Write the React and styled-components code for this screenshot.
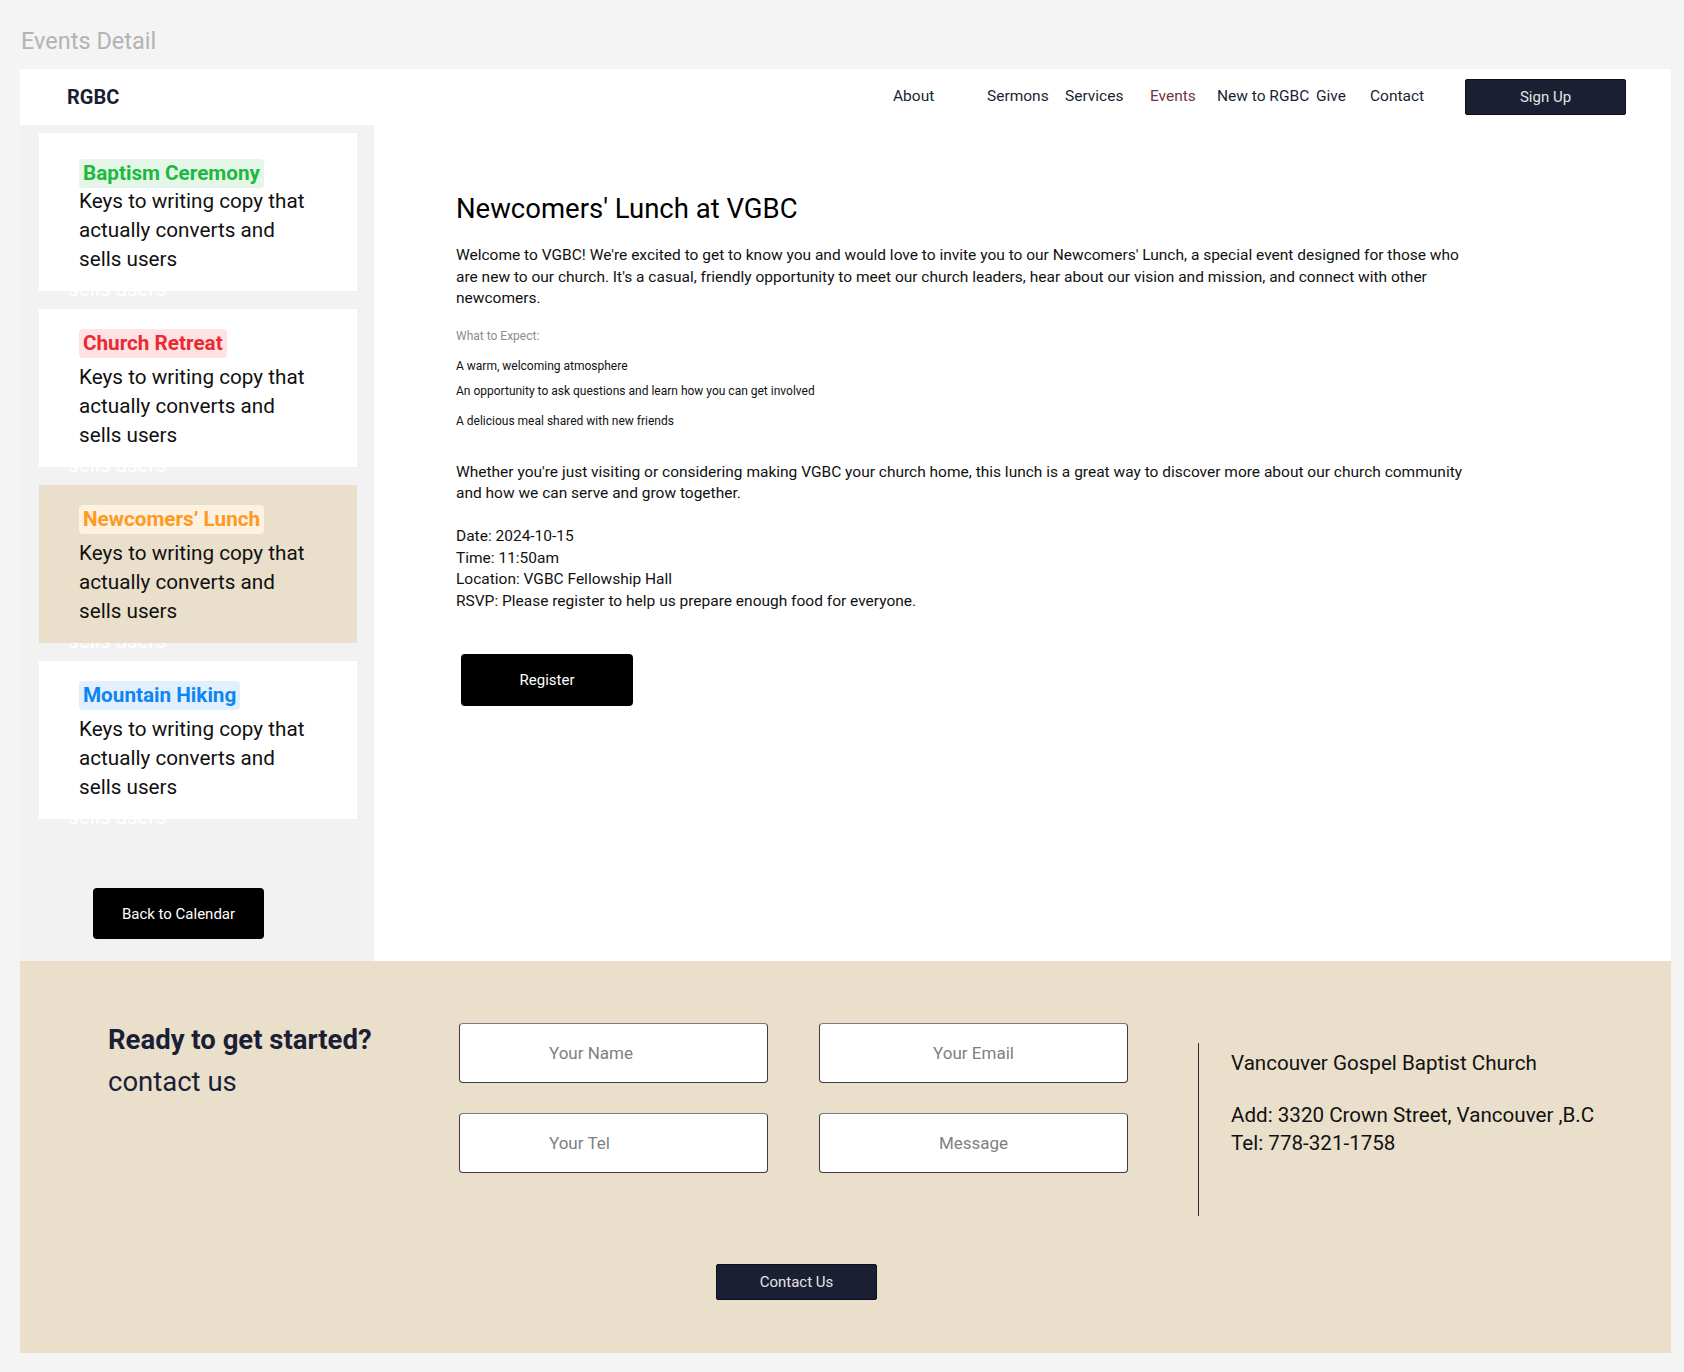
import React from 'react';
import styled, { createGlobalStyle } from 'styled-components';

const GlobalStyle = createGlobalStyle`
  * {
    box-sizing: border-box;
  }

  body {
    margin: 0;
    background: #f4f4f4;
    font-family: Roboto, 'Liberation Sans', sans-serif;
  }
`;

const Page = styled('div')`
  padding: 28px 13px 18px 20px;
`;

const PageTitle = styled('div')`
  margin: 0 0 15px 1px;
  font-size: 23.5px;
  line-height: 26px;
  color: #b3b3b3;
`;

const Frame = styled('div')`
  display: flex;
  flex-direction: column;
  background: #fff;
`;

const Header = styled('header')`
  display: flex;
  align-items: center;
  height: 56px;
  padding: 0 45px 0 47px;
`;

const Logo = styled('div')`
  font-size: 20px;
  font-weight: 700;
  color: #1a1f33;
`;

const Nav = styled('nav')`
  display: flex;
  align-items: center;
  margin-left: auto;
  padding-bottom: 3px;
`;

const NavLink = styled('a')`
  width: ${(p) => p.$width}px;
  font-size: 15.5px;
  color: ${(p) => (p.$active ? '#6f3446' : '#1a1f33')};
  text-decoration: none;
  white-space: nowrap;
`;

const SignUp = styled('button')`
  width: 161px;
  height: 36px;
  border: 1px solid #0c0f1c;
  border-radius: 2px;
  background: #1a1f33;
  color: #e4e4e4;
  font-family: inherit;
  font-size: 15px;
`;

const Body = styled('div')`
  display: flex;
`;

const Sidebar = styled('aside')`
  display: flex;
  flex-direction: column;
  width: 354px;
  padding: 8px 17px 22px 19px;
  background: #f2f2f2;
`;

const CardList = styled('div')`
  display: flex;
  flex-direction: column;
  gap: 18px;
`;

const CardSlot = styled('div')`
  position: relative;
`;

const Card = styled('div')`
  position: relative;
  z-index: 1;
  display: flex;
  flex-direction: column;
  align-items: flex-start;
  height: 158px;
  padding: 20px 0 0 40px;
  background: ${(p) => (p.$active ? '#e9dfcb' : '#fff')};
`;

const Tag = styled('span')`
  padding: 2px 4px;
  border-radius: 4px;
  font-size: 20.7px;
  line-height: 25px;
  font-weight: 700;
  color: ${(p) => p.$color};
  background: ${(p) => p.$bg};
  transform: translateY(${(p) => p.$drop || 0}px);
`;

const CardText = styled('div')`
  width: 232px;
  margin-top: 5px;
  font-size: 20.7px;
  line-height: 29px;
  color: #111;
`;

// leftover copy that peeks out under each card
const Ghost = styled('span')`
  position: absolute;
  z-index: 0;
  top: 142px;
  left: 29px;
  font-size: 20.7px;
  line-height: 29px;
  color: #fff;
`;

const DarkButton = styled('button')`
  width: ${(p) => p.$w}px;
  height: ${(p) => p.$h}px;
  border: none;
  border-radius: 4px;
  background: #000;
  color: #fff;
  font-family: inherit;
  font-size: 15px;
`;

const BackButton = styled(DarkButton)`
  margin: 69px 0 0 54px;
`;

const Main = styled('main')`
  flex: 1;
  padding: 67px 0 0 82px;
`;

const Title = styled('h1')`
  margin: 0;
  font-size: 27.5px;
  line-height: 33px;
  font-weight: 400;
  color: #000;
`;

const Paragraph = styled('p')`
  width: 1016px;
  margin: ${(p) => p.$top}px 0 0;
  font-size: 15.5px;
  line-height: 21.5px;
  color: #111;
`;

const SmallLine = styled('p')`
  margin: ${(p) => p.$top}px 0 0;
  font-size: 12px;
  line-height: 16px;
  color: ${(p) => (p.$muted ? '#8c8c8c' : '#111')};
`;

const RegisterButton = styled(DarkButton)`
  margin: 42px 0 0 5px;
`;

const Footer = styled('footer')`
  display: flex;
  align-items: flex-start;
  padding: 62px 0 53px 88px;
  background: #e9dfcb;
`;

const FooterIntro = styled('div')`
  width: 351px;
  color: #1b1f36;
  font-size: 27.5px;
  line-height: 34px;
`;

const Lead = styled('div')`
  font-weight: 700;
`;

const SubLead = styled('div')`
  margin-top: 8px;
`;

const FormCol = styled('div')`
  display: flex;
  flex-direction: column;
  width: 669px;
`;

const FieldGrid = styled('div')`
  display: grid;
  grid-template-columns: 309px 309px;
  column-gap: 51px;
  row-gap: 30px;
`;

const Field = styled('input')`
  height: 60px;
  padding: 0 0 0 ${(p) => (p.$center ? 0 : 89)}px;
  border: 1px solid #3d3d3d;
  border-top-color: #7a7a7a;
  border-radius: 4px;
  background: #fff;
  font-family: inherit;
  font-size: 17px;
  text-align: ${(p) => (p.$center ? 'center' : 'left')};
  outline: none;

  &::placeholder {
    color: #808080;
  }
`;

const ContactButton = styled('button')`
  align-self: center;
  width: 161px;
  height: 36px;
  margin: 91px 0 0 6px;
  border: 1px solid #0c0f1c;
  border-radius: 2px;
  background: #1a1f33;
  color: #e4e4e4;
  font-family: inherit;
  font-size: 15px;
`;

const Info = styled('div')`
  height: 173px;
  margin: 20px 0 0 70px;
  padding: 6px 0 0 32px;
  border-left: 1px solid #2b2b2b;
  font-size: 20.6px;
  line-height: 28px;
  color: #111;
`;

const Address = styled('div')`
  margin-top: 24px;
`;

const navItems = [
  { label: 'About', width: 94 },
  { label: 'Sermons', width: 78 },
  { label: 'Services', width: 85 },
  { label: 'Events', width: 67, active: true },
  { label: 'New to RGBC', width: 99 },
  { label: 'Give', width: 54 },
  { label: 'Contact', width: 95 },
];

const events = [
  { title: 'Baptism Ceremony', color: '#1db83e', bg: '#e3f6e8', drop: 6 },
  { title: 'Church Retreat', color: '#ea2a30', bg: '#fde3e3' },
  { title: 'Newcomers’ Lunch', color: '#ff9a1e', bg: '#fdf1e2', active: true },
  { title: 'Mountain Hiking', color: '#0d85f2', bg: '#e2effd' },
];

export default function App() {
  return (
    <>
      <GlobalStyle />
      <Page>
        <PageTitle>Events Detail</PageTitle>
        <Frame>
          <Header>
            <Logo>RGBC</Logo>
            <Nav>
              {navItems.map((item) => (
                <NavLink key={item.label} $width={item.width} $active={item.active}>
                  {item.label}
                </NavLink>
              ))}
            </Nav>
            <SignUp>Sign Up</SignUp>
          </Header>

          <Body>
            <Sidebar>
              <CardList>
                {events.map((ev) => (
                  <CardSlot key={ev.title}>
                    <Card $active={ev.active}>
                      <Tag $color={ev.color} $bg={ev.bg} $drop={ev.drop}>
                        {ev.title}
                      </Tag>
                      <CardText>Keys to writing copy that actually converts and sells users</CardText>
                    </Card>
                    <Ghost>sells users</Ghost>
                  </CardSlot>
                ))}
              </CardList>
              <BackButton $w={171} $h={51}>Back to Calendar</BackButton>
            </Sidebar>

            <Main>
              <Title>Newcomers' Lunch at VGBC</Title>
              <Paragraph $top={20}>
                Welcome to VGBC! We're excited to get to know you and would love to invite you to our
                Newcomers' Lunch, a special event designed for those who are new to our church. It's a
                casual, friendly opportunity to meet our church leaders, hear about our vision and
                mission, and connect with other newcomers.
              </Paragraph>
              <SmallLine $top={18} $muted>What to Expect:</SmallLine>
              <SmallLine $top={14}>A warm, welcoming atmosphere</SmallLine>
              <SmallLine $top={9}>An opportunity to ask questions and learn how you can get involved</SmallLine>
              <SmallLine $top={14}>A delicious meal shared with new friends</SmallLine>
              <Paragraph $top={33}>
                Whether you're just visiting or considering making VGBC your church home, this lunch is a
                great way to discover more about our church community and how we can serve and grow
                together.
                <br />
                <br />
                Date: 2024-10-15
                <br />
                Time: 11:50am
                <br />
                Location: VGBC Fellowship Hall
                <br />
                RSVP: Please register to help us prepare enough food for everyone.
              </Paragraph>
              <RegisterButton $w={172} $h={52}>Register</RegisterButton>
            </Main>
          </Body>

          <Footer>
            <FooterIntro>
              <Lead>Ready to get started?</Lead>
              <SubLead>contact us</SubLead>
            </FooterIntro>
            <FormCol>
              <FieldGrid>
                <Field placeholder="Your Name" />
                <Field placeholder="Your Email" $center />
                <Field placeholder="Your Tel" />
                <Field placeholder="Message" $center />
              </FieldGrid>
              <ContactButton>Contact Us</ContactButton>
            </FormCol>
            <Info>
              <div>Vancouver Gospel Baptist Church</div>
              <Address>
                Add: 3320 Crown Street, Vancouver ,B.C
                <br />
                Tel: 778-321-1758
              </Address>
            </Info>
          </Footer>
        </Frame>
      </Page>
    </>
  );
}
